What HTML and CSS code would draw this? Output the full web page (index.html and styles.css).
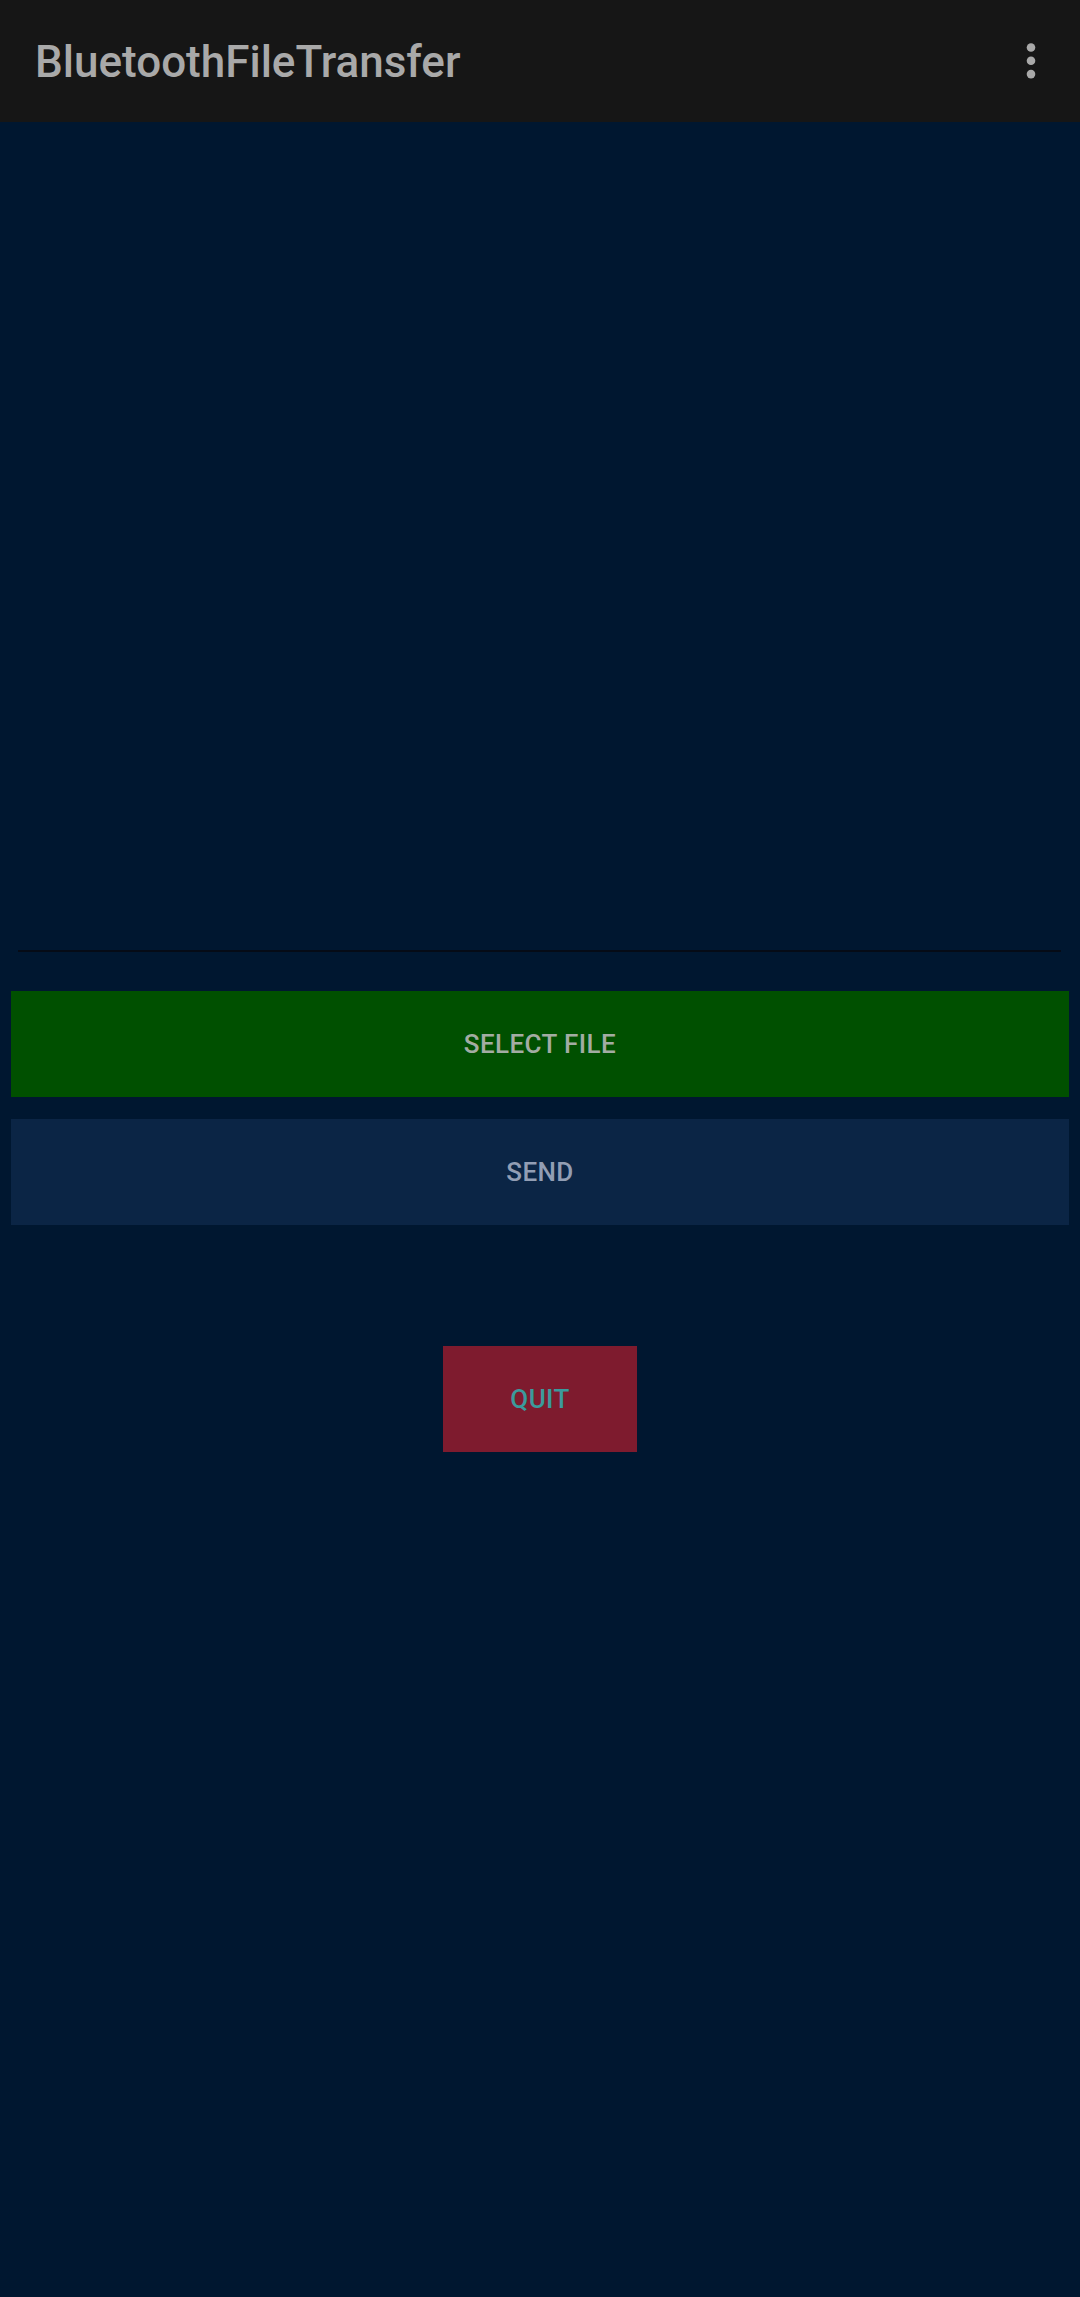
FILE: index.html
```html
<!DOCTYPE html>
<html>
<head>
<meta charset="utf-8">
<link rel="stylesheet" href="styles.css">
</head>
<body>
<header class="appbar">
  <h1 class="title">BluetoothFileTransfer</h1>
  <svg class="menu" width="14" height="42" viewBox="0 0 14 42">
    <circle cx="7" cy="7.5" r="4.3" fill="#a9a9a9"/>
    <circle cx="7" cy="20.8" r="4.3" fill="#a9a9a9"/>
    <circle cx="7" cy="34.1" r="4.3" fill="#a9a9a9"/>
  </svg>
</header>
<main class="content">
  <div class="list"></div>
  <div class="divider"></div>
  <button class="btn btn-select">SELECT FILE</button>
  <button class="btn btn-send">SEND</button>
  <div class="quit-row">
    <button class="btn btn-quit">QUIT</button>
  </div>
</main>
</body>
</html>
```
FILE: styles.css
```css
* { box-sizing: border-box; }
html, body {
  margin: 0;
  padding: 0;
  width: 1080px;
  height: 2297px;
  background: #001730;
  font-family: Roboto, "Noto Sans", sans-serif;
  overflow: hidden;
}
.appbar {
  height: 122px;
  background: #161616;
  display: flex;
  align-items: center;
  justify-content: space-between;
  padding: 0 35px 0 35px;
}
.title {
  margin: 0;
  font-size: 44px;
  font-weight: 500;
  color: #a9a9a9;
  letter-spacing: 0;
  line-height: 1;
  padding-top: 2px;
}
.menu {
  display: block;
  margin-right: 7px;
  margin-top: 0;
}
.content {
  display: flex;
  flex-direction: column;
  padding: 0 11px;
}
.list {
  height: 828px;
}
.divider {
  height: 2px;
  background: #050b16;
  margin: 0 8px 0 7px;
}
.btn {
  border: none;
  border-radius: 0;
  font-family: Roboto, "Noto Sans", sans-serif;
  font-weight: 500;
  font-size: 26px;
  letter-spacing: 0.4px;
  height: 106px;
  padding: 0;
  cursor: pointer;
}
.btn-select {
  margin-top: 39px;
  background: #005000;
  color: #a3aca3;
}
.btn-send {
  margin-top: 22px;
  background: #0b2545;
  color: #929eb4;
}
.quit-row {
  display: flex;
  justify-content: center;
  margin-top: 121px;
}
.btn-quit {
  width: 194px;
  background: #7e1b2e;
  color: #3b9a9c;
}
```
